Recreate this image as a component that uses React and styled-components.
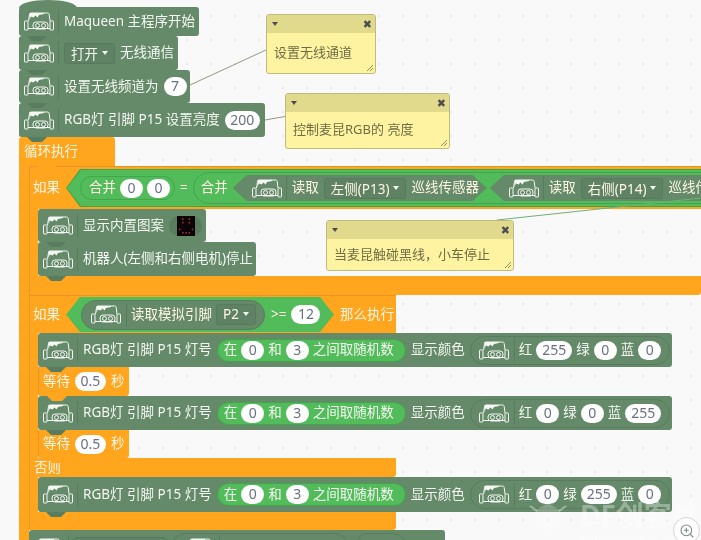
import React from 'react';
import styled, { createGlobalStyle } from 'styled-components';
import { ZoomIn } from 'lucide-react';

const GRAY = '#648a69';
const GRAY_DARK = '#587c5d';
const ORANGE = '#ffa61e';
const ORANGE_DARK = '#e5952a';
const GREEN = '#52bc5b';
const GREEN_DARK = '#43a54c';

const GlobalStyle = createGlobalStyle`
  html, body {
    margin: 0;
    padding: 0;
    overflow: hidden;
    background: #f9f9f9;
  }
`;

const Workspace = styled.div`
  position: relative;
  width: 701px;
  height: 540px;
  box-sizing: border-box;
  padding: 7px 0 0 19px;
  overflow: hidden;
  font-family: "Noto Sans", "Noto Sans CJK SC", sans-serif;
  font-size: 13.5px;
  color: #f4f7f2;
  background-color: #f9f9f9;
  background-image: radial-gradient(circle, #e6e6e6 0.8px, transparent 1px);
  background-size: 24px 24px;
  background-position: 7px 4px;
  filter: blur(0.4px);
`;

const Stack = styled.div`
  display: flex;
  flex-direction: column;
  align-items: flex-start;
`;

const Block = styled.div`
  position: relative;
  display: flex;
  align-items: center;
  flex: none;
  box-sizing: border-box;
  width: ${(p) => p.$w}px;
  height: ${(p) => p.$h}px;
  gap: 5px;
  background: ${GRAY};
  border-radius: 3px;
  &::after {
    content: '';
    position: absolute;
    z-index: 2;
    left: 8px;
    bottom: -5px;
    width: 20px;
    height: 5px;
    background: ${GRAY_DARK};
    clip-path: polygon(0 0, 100% 0, 75% 100%, 25% 100%);
  }
`;

const HatBlock = styled(Block)`
  &::before {
    content: '';
    position: absolute;
    left: 0;
    top: -7px;
    width: 58px;
    height: 8px;
    background: ${GRAY};
    border-radius: 50% 50% 0 0 / 100% 100% 0 0;
  }
`;

const OrangeBlock = styled(Block)`
  background: ${ORANGE};
  color: #fff6e6;
  padding-left: 5px;
  &::after {
    background: ${ORANGE};
    filter: drop-shadow(0 1px 0 ${ORANGE_DARK});
  }
`;

const WaitBlock = styled(OrangeBlock)`
  border-left: 1px solid ${ORANGE_DARK};
  border-radius: 0 0 3px 3px;
  padding-left: 4px;
`;

const CarCell = styled.div`
  flex: none;
  display: flex;
  align-items: center;
  box-sizing: border-box;
  width: 40px;
  height: 24px;
  padding-left: 5px;
  border-right: 1px solid ${GRAY_DARK};
`;

const PillCarCell = styled(CarCell)`
  width: 36px;
  padding-left: ${(p) => p.$pl || 0}px;
`;

const Label = styled.span`
  flex: none;
  white-space: nowrap;
  line-height: 18px;
  padding-bottom: 2px;
  margin-left: ${(p) => p.$ml || 0}px;
`;

const Dropdown = styled.span`
  flex: none;
  display: flex;
  align-items: center;
  gap: 4px;
  box-sizing: border-box;
  height: 21px;
  min-width: ${(p) => p.$w || 0}px;
  padding: 0 6px 1px;
  white-space: nowrap;
  background: rgba(0, 0, 0, 0.05);
  border: 1px solid rgba(0, 0, 0, 0.07);
  border-radius: 3px;
  &::after {
    content: '';
    border-left: 3.5px solid transparent;
    border-right: 3.5px solid transparent;
    border-top: 4px solid #f4f7f2;
    margin-left: auto;
  }
`;

const Num = styled.span`
  flex: none;
  box-sizing: border-box;
  min-width: ${(p) => p.$w || 23}px;
  height: 19px;
  padding: 0 4px;
  font-size: 14px;
  line-height: 18px;
  text-align: center;
  color: #6a6f85;
  background: #fff;
  border-radius: 10px;
`;

const Hex = styled.div`
  flex: none;
  display: flex;
  align-items: center;
  box-sizing: border-box;
  width: ${(p) => p.$w}px;
  height: ${(p) => p.$h}px;
  gap: ${(p) => p.$gap || 0}px;
  margin-left: ${(p) => p.$ml || 0}px;
  padding-left: ${(p) => p.$pl || 0}px;
  background: ${(p) => p.$bg};
  clip-path: polygon(0 50%, 14px 0, calc(100% - 14px) 0, 100% 50%, calc(100% - 14px) 100%, 14px 100%);
`;

const Pill = styled.div`
  flex: none;
  display: flex;
  align-items: center;
  gap: ${(p) => p.$gap ?? 4}px;
  box-sizing: border-box;
  width: ${(p) => (p.$w ? `${p.$w}px` : 'auto')};
  height: ${(p) => p.$h}px;
  margin-left: ${(p) => p.$ml || 0}px;
  padding: 0 ${(p) => p.$pad}px;
  background: ${(p) => p.$bg};
  border: 1px solid ${(p) => p.$edge};
  border-radius: 16px;
`;

const LoopHead = styled(OrangeBlock)`
  border-radius: 3px 3px 0 0;
  &::after {
    left: 18px;
  }
`;

const LoopBody = styled.div`
  border-left: 10px solid ${ORANGE};
  display: flex;
  flex-direction: column;
  align-items: flex-start;
`;

const IfBlock = styled.div`
  border-left: 1px solid ${ORANGE_DARK};
  display: flex;
  flex-direction: column;
  align-items: flex-start;
`;

const IfHead = styled.div`
  display: flex;
  align-items: center;
  box-sizing: border-box;
  width: ${(p) => p.$w}px;
  height: ${(p) => p.$h}px;
  padding-left: 3px;
  gap: 6px;
  color: #fff6e6;
  background: ${ORANGE};
  border-top: 1px solid ${ORANGE_DARK};
  overflow: hidden;
  flex: none;
`;

const IfBody = styled.div`
  border-left: 8px solid ${ORANGE};
  display: flex;
  flex-direction: column;
  align-items: flex-start;
`;

const IfBar = styled.div`
  box-sizing: border-box;
  width: ${(p) => p.$w}px;
  height: ${(p) => p.$h}px;
  padding-left: 4px;
  color: #fff6e6;
  line-height: 19px;
  background: ${ORANGE};
  border-radius: 0 0 3px 0;
  flex: none;
`;

const MatrixPill = styled.span`
  flex: none;
  display: flex;
  justify-content: center;
  width: 33px;
  height: 20px;
  background: ${GRAY_DARK};
  border-radius: 10px;
`;

const Note = styled.div`
  position: absolute;
  z-index: 4;
  left: ${(p) => p.$x}px;
  top: ${(p) => p.$y}px;
  width: ${(p) => p.$w}px;
  height: ${(p) => p.$h}px;
  box-sizing: border-box;
  display: flex;
  flex-direction: column;
  font-size: 13px;
  color: #6f6d45;
  background: #fdf3a0;
  border: 1px solid #bdbb80;
  border-radius: 3px;
  overflow: hidden;
`;

const NoteBar = styled.div`
  flex: none;
  display: flex;
  align-items: center;
  justify-content: space-between;
  height: 18px;
  padding: 0 3px 0 5px;
  background: #e1d98c;
`;

const NoteCaret = styled.span`
  border-left: 3.5px solid transparent;
  border-right: 3.5px solid transparent;
  border-top: 4px solid #4b4d50;
`;

const NoteClose = styled.span`
  font: bold 11px/1 "DejaVu Sans", sans-serif;
  color: #4b4d50;
`;

const NoteText = styled.div`
  flex: 1;
  display: flex;
  align-items: center;
  padding: 0 7px 3px;
  white-space: nowrap;
`;

const Grip = styled.svg`
  position: absolute;
  right: 1px;
  bottom: 1px;
`;

const Wires = styled.svg`
  position: absolute;
  z-index: 3;
  left: 0;
  top: 0;
`;

const Watermark = styled.div`
  position: absolute;
  z-index: 5;
  left: 528px;
  top: 500px;
  display: flex;
  gap: 12px;
  color: rgba(255, 255, 255, 0.34);
`;

const MarkText = styled.div`
  font-size: 28px;
  font-weight: 700;
  line-height: 30px;
  white-space: nowrap;
`;

const MarkSub = styled.div`
  font-size: 11px;
  line-height: 12px;
  letter-spacing: 0.5px;
  white-space: nowrap;
`;

const ZoomButton = styled.div`
  position: absolute;
  z-index: 6;
  left: 673px;
  top: 517px;
  width: 27px;
  height: 27px;
  box-sizing: border-box;
  display: flex;
  align-items: center;
  justify-content: center;
  color: #7d8a86;
  background: #fff;
  border: 1px solid #d4d4d4;
  border-radius: 50%;
`;

const Car = () => (
  <svg width="30" height="19" viewBox="0 0 30 19" fill="none" stroke="#f4f7f2" strokeWidth="1">
    <path d="M4.5 9 L5.5 2.5 Q5.7 1 7 1 L23.5 1 Q25 1 25.2 2.5 L26 9" />
    <path d="M5.5 1 L20 1 L20 2 L15 3 L13.5 5.5 L11.5 3.5 L9.5 5.5 L6.8 4.5 L5.6 8 Z" fill="#f4f7f2" stroke="none" />
    <rect x="0.5" y="9" width="3.5" height="9" rx="0.6" />
    <rect x="26" y="9" width="3.5" height="9" rx="0.6" />
    <path d="M4 16.5 L26 16.5" />
    <rect x="9" y="10" width="15" height="7" rx="3" />
    <circle cx="13.5" cy="13.5" r="2" />
    <circle cx="19.5" cy="13.5" r="2" />
  </svg>
);

const CarBox = () => (
  <CarCell>
    <Car />
  </CarCell>
);

const Matrix = () => {
  const lit = [[1, 0], [3, 0], [1, 1], [3, 1], [0, 3], [4, 3], [1, 4], [2, 4], [3, 4]];
  return (
    <svg width="18" height="20" viewBox="0 0 18 20">
      <rect width="18" height="20" fill="#0b0508" />
      {lit.map(([x, y]) => (
        <rect key={`${x}-${y}`} x={2 + x * 3.2} y={2.5 + y * 3.4} width="1.4" height="1.4" fill="#d0303c" />
      ))}
    </svg>
  );
};

const RandomPill = () => (
  <Pill $h={23} $pad={6} $bg={GREEN} $edge={GREEN_DARK} $w={189}>
    <Label>在</Label>
    <Num>0</Num>
    <Label>和</Label>
    <Num>3</Num>
    <Label>之间取随机数</Label>
  </Pill>
);

const RgbRow = ({ h, r, g, b }) => (
  <Block $w={634} $h={h}>
    <CarBox />
    <Label>RGB灯 引脚 P15 灯号</Label>
    <RandomPill />
    <Label>显示颜色</Label>
    <Pill $h={29} $pad={8} $bg={GRAY} $edge={GRAY_DARK}>
      <PillCarCell>
        <Car />
      </PillCarCell>
      <Label>红</Label>
      <Num $w={r > 9 ? 36 : 23}>{r}</Num>
      <Label>绿</Label>
      <Num $w={g > 9 ? 36 : 23}>{g}</Num>
      <Label>蓝</Label>
      <Num $w={b > 9 ? 36 : 23}>{b}</Num>
    </Pill>
  </Block>
);

const Wait = ({ h }) => (
  <WaitBlock $w={91} $h={h}>
    <Label>等待</Label>
    <Num $w={31}>0.5</Num>
    <Label>秒</Label>
  </WaitBlock>
);

const CommentNote = ({ x, y, w, h, children }) => (
  <Note $x={x} $y={y} $w={w} $h={h}>
    <NoteBar>
      <NoteCaret />
      <NoteClose>✖</NoteClose>
    </NoteBar>
    <NoteText>{children}</NoteText>
    <Grip width="8" height="8" viewBox="0 0 8 8" stroke="#8f8d5e">
      <path d="M1 7 L7 1 M4 7 L7 4" />
    </Grip>
  </Note>
);

const SensorHex = ({ side, w, ml }) => (
  <Hex $h={26} $w={w} $ml={ml} $bg={GRAY} $pl={14} $gap={5}>
    <CarBox />
    <Label>读取</Label>
    <Dropdown>{side}</Dropdown>
    <Label>巡线传感器</Label>
  </Hex>
);

export default function App() {
  return (
    <Workspace>
      <GlobalStyle />
      <Stack>
        <HatBlock $w={180} $h={29}>
          <CarBox />
          <Label>Maqueen 主程序开始</Label>
        </HatBlock>
        <Block $w={159} $h={34}>
          <CarBox />
          <Dropdown>打开</Dropdown>
          <Label>无线通信</Label>
        </Block>
        <Block $w={171} $h={33}>
          <CarBox />
          <Label>设置无线频道为</Label>
          <Num>7</Num>
        </Block>
        <Block $w={246} $h={34}>
          <CarBox />
          <Label>RGB灯 引脚 P15 设置亮度</Label>
          <Num $w={35}>200</Num>
        </Block>
        <LoopHead $w={96} $h={29}>
          <Label>循环执行</Label>
        </LoopHead>
        <LoopBody>
          <IfBlock>
            <IfHead $w={671} $h={43}>
              <Label>如果</Label>
              <Hex $h={38} $w={760} $bg={GREEN_DARK}>
                <Hex $h={36} $w={758} $ml={1} $pl={13} $bg={GREEN}>
                  <Pill $h={24} $w={95} $pad={8} $bg={GREEN} $edge={GREEN_DARK}>
                    <Label>合并</Label>
                    <Num>0</Num>
                    <Num>0</Num>
                  </Pill>
                  <Label $ml={5}>=</Label>
                  <Pill $h={32} $w={640} $ml={5} $pad={7} $gap={0} $bg={GREEN} $edge={GREEN_DARK}>
                    <Label>合并</Label>
                    <SensorHex side="左侧(P13)" w={254} ml={5} />
                    <SensorHex side="右侧(P14)" w={260} ml={3} />
                  </Pill>
                </Hex>
              </Hex>
            </IfHead>
            <IfBody>
              <Block $w={168} $h={33}>
                <CarBox />
                <Label>显示内置图案</Label>
                <MatrixPill>
                  <Matrix />
                </MatrixPill>
              </Block>
              <Block $w={218} $h={34}>
                <CarBox />
                <Label>机器人(左侧和右侧电机)停止</Label>
              </Block>
            </IfBody>
            <IfBar $w={671} $h={19} />
          </IfBlock>
          <IfBlock>
            <IfHead $w={366} $h={38}>
              <Label>如果</Label>
              <Hex $h={35} $w={268} $pl={15} $gap={5} $bg={GREEN}>
                <Pill $h={30} $w={184} $pad={9} $bg={GRAY} $edge={GRAY_DARK}>
                  <PillCarCell>
                    <Car />
                  </PillCarCell>
                  <Label>读取模拟引脚</Label>
                  <Dropdown>P2</Dropdown>
                </Pill>
                <Label $ml={1}>&gt;=</Label>
                <Num $w={29}>12</Num>
              </Hex>
              <Label>那么执行</Label>
            </IfHead>
            <IfBody>
              <RgbRow h={34} r={255} g={0} b={0} />
              <Wait h={29} />
              <RgbRow h={34} r={0} g={0} b={255} />
              <Wait h={28} />
            </IfBody>
            <IfBar $w={366} $h={19}>否则</IfBar>
            <IfBody>
              <RgbRow h={35} r={0} g={255} b={0} />
            </IfBody>
            <IfBar $w={366} $h={18} />
          </IfBlock>
          <Block $w={416} $h={34}>
            <CarBox />
            <Dropdown $w={92} />
            <Pill $h={29} $w={178} $pad={8} $bg={GRAY} $edge={GRAY_DARK}>
              <CarBox />
            </Pill>
            <Pill $h={29} $w={53} $pad={8} $bg={GRAY} $edge={GRAY_DARK} />
          </Block>
        </LoopBody>
      </Stack>

      <Wires width="701" height="540" fill="none">
        <path d="M190 85 L266 50" stroke="#8f9a80" />
        <path d="M265 120 L285 116.5" stroke="#8f9a80" />
        <path d="M701 198 L497 220" stroke="#6fae77" />
      </Wires>

      <CommentNote x={266} y={14} w={110} h={60}>设置无线通道</CommentNote>
      <CommentNote x={285} y={93} w={165} h={56}>控制麦昆RGB的 亮度</CommentNote>
      <CommentNote x={326} y={220} w={188} h={51}>当麦昆触碰黑线，小车停止</CommentNote>

      <Watermark>
        <svg width="40" height="40" viewBox="0 0 40 40" fill="none" stroke="rgba(255,255,255,.4)" strokeWidth="2">
          <path d="M2 6 L9 11 M38 6 L31 11" />
          <path d="M20 3 L32 10 V28 L20 36 L8 28 V10 Z" fill="rgba(255,255,255,.22)" stroke="none" />
        </svg>
        <div>
          <MarkText>DF创客社区</MarkText>
          <MarkSub>www.DFRobot.com</MarkSub>
        </div>
      </Watermark>

      <ZoomButton>
        <ZoomIn size={16} strokeWidth={1.6} />
      </ZoomButton>
    </Workspace>
  );
}
